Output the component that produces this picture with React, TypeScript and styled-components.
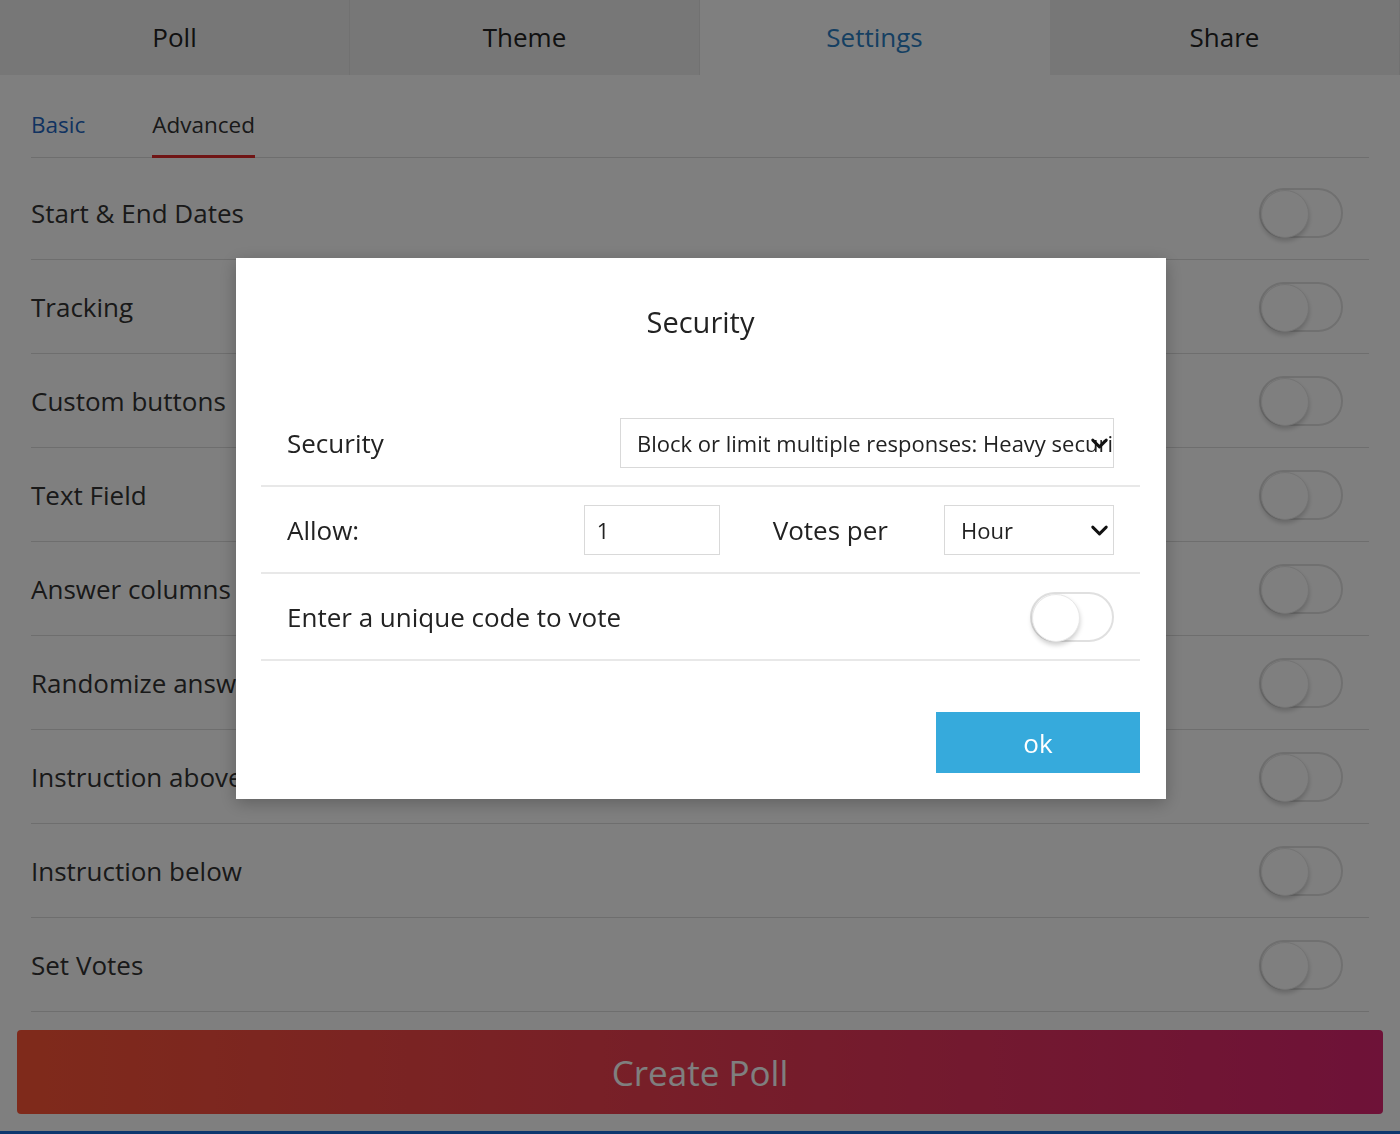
import React from 'react';
import styled, { createGlobalStyle } from 'styled-components';
import { ChevronDown } from 'lucide-react';

const GlobalStyle = createGlobalStyle`
  * {
    box-sizing: border-box;
  }
  body {
    margin: 0;
    font-family: "Open Sans", "Noto Sans", Arial, sans-serif;
    color: #333;
    background: #fff;
  }
`;

const Page = styled.div`
  width: 1400px;
  min-height: 1134px;
  background: #fff;
  border-bottom: 3px solid #1a6edc;
`;

const TabBar = styled.div`
  display: grid;
  grid-template-columns: repeat(4, 1fr);
  height: 75px;
`;

const Tab = styled.div<{ $active?: boolean }>`
  display: flex;
  align-items: center;
  justify-content: center;
  font-size: 26px;
  background: ${(p) => (p.$active ? '#fff' : '#eeeeee')};
  color: ${(p) => (p.$active ? '#2b7fc4' : '#222')};
  border-right: 1px solid ${(p) => (p.$active ? '#fff' : '#e2e2e2')};
  padding-bottom: 2px;
`;

const Content = styled.div`
  padding: 0 31px;
`;

const SubTabs = styled.div`
  display: flex;
  gap: 67px;
  height: 83px;
  border-bottom: 1px solid #dcdcdc;
`;

const SubTab = styled.div<{ $selected?: boolean }>`
  align-self: flex-end;
  margin-bottom: -1px;
  padding-bottom: 14px;
  font-size: 22.5px;
  line-height: 32px;
  color: ${(p) => (p.$selected ? '#333' : '#2366c2')};
  border-bottom: 3px solid ${(p) => (p.$selected ? '#e02a2a' : 'transparent')};
`;

const SettingsList = styled.div`
  margin-top: 8px;
`;

const SettingRow = styled.div`
  display: flex;
  align-items: center;
  justify-content: space-between;
  height: 94px;
  padding-right: 26px;
  border-bottom: 1px solid #dcdcdc;
  font-size: 26px;
  color: #333;
`;

const Toggle = styled.span`
  position: relative;
  display: inline-block;
  width: 84px;
  height: 50px;
  border-radius: 25px;
  border: 2px solid #e0e0e0;
  background: #fff;

  &::after {
    content: '';
    position: absolute;
    top: 0;
    left: 0;
    width: 46px;
    height: 46px;
    border-radius: 50%;
    background: #fff;
    border: 1px solid #e8e8e8;
    box-shadow: 0 3px 5px rgba(0, 0, 0, 0.2);
  }
`;

const CreateWrap = styled.div`
  padding: 18px 17px 17px;
`;

const CreateButton = styled.button`
  display: block;
  width: 100%;
  height: 84px;
  border: none;
  border-radius: 4px;
  background: linear-gradient(90deg, #ff5536, #dc2470);
  color: #fff;
  font-family: "Open Sans", "Noto Sans", Arial, sans-serif;
  font-size: 35px;
  cursor: pointer;
`;

const Overlay = styled.div`
  position: fixed;
  inset: 0;
  background: rgba(0, 0, 0, 0.5);
  display: flex;
  justify-content: center;
  align-items: flex-start;
  padding: 258px 0 0 2px;
`;

const Modal = styled.div`
  width: 930px;
  background: #fff;
  padding: 0 26px 26px 25px;
  box-shadow: 0 4px 16px rgba(0, 0, 0, 0.25);
  display: flex;
  flex-direction: column;
`;

const ModalTitle = styled.h2`
  margin: 44px 0 58px;
  height: 40px;
  line-height: 40px;
  text-align: center;
  font-size: 29px;
  font-weight: 400;
  color: #222;
`;

const ModalRow = styled.div`
  display: flex;
  align-items: center;
  height: 87px;
  padding: 0 26px;
  border-bottom: 2px solid #e8e8e8;
`;

const Label = styled.span<{ $grow?: boolean; $gap?: number }>`
  font-size: 26px;
  color: #222;
  flex: ${(p) => (p.$grow ? 1 : 'none')};
  margin-right: ${(p) => p.$gap ?? 0}px;
`;

const SelectBox = styled.div<{ $width: number }>`
  position: relative;
  width: ${(p) => p.$width}px;
  height: 50px;
  border: 1px solid #d9d9d9;
  background: #fff;

  svg {
    position: absolute;
    right: 0;
    top: 11px;
    pointer-events: none;
    color: #111;
  }
`;

const Select = styled.select`
  appearance: none;
  width: 100%;
  height: 100%;
  border: none;
  background: transparent;
  padding: 0 0 0 16px;
  font-family: "Open Sans", "Noto Sans", Arial, sans-serif;
  font-size: 22px;
  color: #222;
  outline: none;
`;

const NumberInput = styled.input`
  width: 136px;
  height: 50px;
  margin-right: 53px;
  border: 1px solid #d9d9d9;
  padding: 0 12px;
  font-family: "Open Sans", "Noto Sans", Arial, sans-serif;
  font-size: 22px;
  color: #222;
  outline: none;
`;

const Spacer = styled.span`
  flex: 1;
`;

const OkButton = styled.button`
  align-self: flex-end;
  margin-top: 51px;
  width: 204px;
  height: 61px;
  border: none;
  background: #36aadc;
  color: #fff;
  font-family: "Open Sans", "Noto Sans", Arial, sans-serif;
  font-size: 26px;
  cursor: pointer;
`;

const tabs = ['Poll', 'Theme', 'Settings', 'Share'];

const settings = [
  'Start & End Dates',
  'Tracking',
  'Custom buttons',
  'Text Field',
  'Answer columns',
  'Randomize answers',
  'Instruction above',
  'Instruction below',
  'Set Votes',
];

const App: React.FC = () => {
  return (
    <>
      <GlobalStyle />
      <Page>
        <TabBar>
          {tabs.map((t) => (
            <Tab key={t} $active={t === 'Settings'}>
              {t}
            </Tab>
          ))}
        </TabBar>
        <Content>
          <SubTabs>
            <SubTab>Basic</SubTab>
            <SubTab $selected>Advanced</SubTab>
          </SubTabs>
          <SettingsList>
            {settings.map((s) => (
              <SettingRow key={s}>
                <span>{s}</span>
                <Toggle />
              </SettingRow>
            ))}
          </SettingsList>
        </Content>
        <CreateWrap>
          <CreateButton>Create Poll</CreateButton>
        </CreateWrap>
      </Page>

      {/* Security dialog */}
      <Overlay>
        <Modal>
          <ModalTitle>Security</ModalTitle>
          <ModalRow>
            <Label $grow>Security</Label>
            <SelectBox $width={494}>
              <Select defaultValue="heavy">
                <option value="heavy">Block or limit multiple responses: Heavy security</option>
                <option value="none">No restrictions</option>
              </Select>
              <ChevronDown size={27} strokeWidth={2.6} />
            </SelectBox>
          </ModalRow>
          <ModalRow>
            <Label $grow>Allow:</Label>
            <NumberInput type="text" defaultValue="1" />
            <Label $gap={56}>Votes per</Label>
            <SelectBox $width={170}>
              <Select defaultValue="hour">
                <option value="hour">Hour</option>
                <option value="day">Day</option>
                <option value="week">Week</option>
              </Select>
              <ChevronDown size={27} strokeWidth={2.6} />
            </SelectBox>
          </ModalRow>
          <ModalRow>
            <Label>Enter a unique code to vote</Label>
            <Spacer />
            <Toggle />
          </ModalRow>
          <OkButton>ok</OkButton>
        </Modal>
      </Overlay>
    </>
  );
};

export default App;
